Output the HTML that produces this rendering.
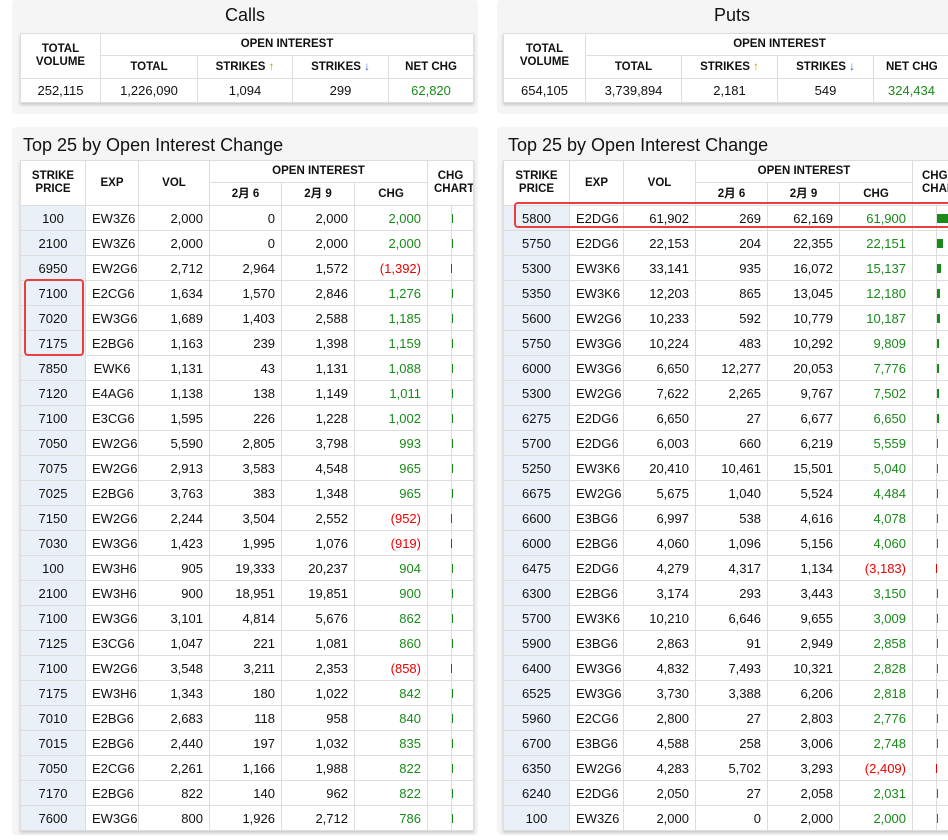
<!DOCTYPE html><html><head><meta charset="utf-8"><style>
body{margin:0;width:948px;height:840px;overflow:hidden;background:#fff;font-family:"Liberation Sans","Noto Sans CJK SC",sans-serif;position:relative}
.p{position:absolute;background:#f5f5f5;border-radius:4px}
.t1{position:absolute;font-size:18px;color:#111;text-align:center}
.t2{position:absolute;font-size:18px;color:#111}
table{position:absolute;border-collapse:collapse;table-layout:fixed;background:#fff;box-shadow:0 2px 3px rgba(0,0,0,.18);font-size:13px;color:#111}
td,th{border:1px solid #ddd;padding:0 6px;white-space:nowrap;overflow:hidden}
th{font-size:11.5px;font-weight:bold;text-align:center;line-height:13px}
.s td{height:23px;text-align:center}
.d td{height:24px;text-align:right}
.d td:nth-child(1){background:#eaf0f8;text-align:center}
.d td:nth-child(2){text-align:center}
.g{color:#1a8a1a}.r{color:#e00}
td.c{padding:0;position:relative}
td.c:before{content:"";position:absolute;left:23px;top:0;bottom:0;width:1px;background:#ddd}
td.c i{position:absolute;top:8px;height:9px;left:24px;width:1px;background:#1a8a1a}
td.c i.n{left:23px;background:#e00}
.hl{position:absolute;border:2px solid #e84040;border-radius:4px}
</style></head><body>
<div class="p" style="left:12px;top:0;width:466px;height:114px"></div>
<div class="p" style="left:497px;top:0;width:460px;height:114px"></div>
<div class="p" style="left:12px;top:127px;width:466px;height:708px"></div>
<div class="p" style="left:497px;top:127px;width:460px;height:708px"></div>
<div class="t1" style="left:12px;top:5px;width:466px">Calls</div>
<div class="t1" style="left:497px;top:5px;width:470px">Puts</div>
<div class="t2" style="left:23px;top:135px">Top 25 by Open Interest Change</div>
<div class="t2" style="left:508px;top:135px">Top 25 by Open Interest Change</div>

<table class="s" style="left:20px;top:33px;width:453px">
<colgroup><col style="width:80px"><col style="width:97px"><col style="width:95px"><col style="width:96px"><col style="width:85px"></colgroup>
<tr><th rowspan="2">TOTAL<br>VOLUME</th><th colspan="4" style="height:21px">OPEN INTEREST</th></tr>
<tr><th style="height:22px">TOTAL</th><th>STRIKES <span style="color:#c90">↑</span></th><th>STRIKES <span style="color:#36c">↓</span></th><th>NET CHG</th></tr>
<tr><td>252,115</td><td>1,226,090</td><td>1,094</td><td>299</td><td class="g">62,820</td></tr>
</table>
<table class="s" style="left:503px;top:33px;width:470px">
<colgroup><col style="width:82px"><col style="width:96px"><col style="width:96px"><col style="width:96px"><col style="width:100px"></colgroup>
<tr><th rowspan="2">TOTAL<br>VOLUME</th><th colspan="4" style="height:21px">OPEN INTEREST</th></tr>
<tr><th style="height:22px">TOTAL</th><th>STRIKES <span style="color:#c90">↑</span></th><th>STRIKES <span style="color:#36c">↓</span></th><th style="text-align:left;padding-left:12px">NET CHG</th></tr>
<tr><td>654,105</td><td>3,739,894</td><td>2,181</td><td>549</td><td class="g" style="text-align:left;padding-left:14px">324,434</td></tr>
</table>

<table class="d" style="left:20px;top:160px;width:453px">
<colgroup><col style="width:65px"><col style="width:53px"><col style="width:71px"><col style="width:72px"><col style="width:73px"><col style="width:73px"><col style="width:46px"></colgroup>
<tr><th rowspan="2">STRIKE<br>PRICE</th><th rowspan="2">EXP</th><th rowspan="2">VOL</th><th colspan="3" style="height:21px">OPEN INTEREST</th><th rowspan="2">CHG<br>CHART</th></tr>
<tr><th style="height:22px">2月 6</th><th>2月 9</th><th>CHG</th></tr>
<tr><td>100</td><td>EW3Z6</td><td>2,000</td><td>0</td><td>2,000</td><td class="g">2,000</td><td class="c"><i></i></td></tr>
<tr><td>2100</td><td>EW3Z6</td><td>2,000</td><td>0</td><td>2,000</td><td class="g">2,000</td><td class="c"><i></i></td></tr>
<tr><td>6950</td><td>EW2G6</td><td>2,712</td><td>2,964</td><td>1,572</td><td class="r">(1,392)</td><td class="c"><i class="n"></i></td></tr>
<tr><td>7100</td><td>E2CG6</td><td>1,634</td><td>1,570</td><td>2,846</td><td class="g">1,276</td><td class="c"><i></i></td></tr>
<tr><td>7020</td><td>EW3G6</td><td>1,689</td><td>1,403</td><td>2,588</td><td class="g">1,185</td><td class="c"><i></i></td></tr>
<tr><td>7175</td><td>E2BG6</td><td>1,163</td><td>239</td><td>1,398</td><td class="g">1,159</td><td class="c"><i></i></td></tr>
<tr><td>7850</td><td>EWK6</td><td>1,131</td><td>43</td><td>1,131</td><td class="g">1,088</td><td class="c"><i></i></td></tr>
<tr><td>7120</td><td>E4AG6</td><td>1,138</td><td>138</td><td>1,149</td><td class="g">1,011</td><td class="c"><i></i></td></tr>
<tr><td>7100</td><td>E3CG6</td><td>1,595</td><td>226</td><td>1,228</td><td class="g">1,002</td><td class="c"><i></i></td></tr>
<tr><td>7050</td><td>EW2G6</td><td>5,590</td><td>2,805</td><td>3,798</td><td class="g">993</td><td class="c"><i></i></td></tr>
<tr><td>7075</td><td>EW2G6</td><td>2,913</td><td>3,583</td><td>4,548</td><td class="g">965</td><td class="c"><i></i></td></tr>
<tr><td>7025</td><td>E2BG6</td><td>3,763</td><td>383</td><td>1,348</td><td class="g">965</td><td class="c"><i></i></td></tr>
<tr><td>7150</td><td>EW2G6</td><td>2,244</td><td>3,504</td><td>2,552</td><td class="r">(952)</td><td class="c"><i class="n"></i></td></tr>
<tr><td>7030</td><td>EW3G6</td><td>1,423</td><td>1,995</td><td>1,076</td><td class="r">(919)</td><td class="c"><i class="n"></i></td></tr>
<tr><td>100</td><td>EW3H6</td><td>905</td><td>19,333</td><td>20,237</td><td class="g">904</td><td class="c"><i></i></td></tr>
<tr><td>2100</td><td>EW3H6</td><td>900</td><td>18,951</td><td>19,851</td><td class="g">900</td><td class="c"><i></i></td></tr>
<tr><td>7100</td><td>EW3G6</td><td>3,101</td><td>4,814</td><td>5,676</td><td class="g">862</td><td class="c"><i></i></td></tr>
<tr><td>7125</td><td>E3CG6</td><td>1,047</td><td>221</td><td>1,081</td><td class="g">860</td><td class="c"><i></i></td></tr>
<tr><td>7100</td><td>EW2G6</td><td>3,548</td><td>3,211</td><td>2,353</td><td class="r">(858)</td><td class="c"><i class="n"></i></td></tr>
<tr><td>7175</td><td>EW3H6</td><td>1,343</td><td>180</td><td>1,022</td><td class="g">842</td><td class="c"><i></i></td></tr>
<tr><td>7010</td><td>E2BG6</td><td>2,683</td><td>118</td><td>958</td><td class="g">840</td><td class="c"><i></i></td></tr>
<tr><td>7015</td><td>E2BG6</td><td>2,440</td><td>197</td><td>1,032</td><td class="g">835</td><td class="c"><i></i></td></tr>
<tr><td>7050</td><td>E2CG6</td><td>2,261</td><td>1,166</td><td>1,988</td><td class="g">822</td><td class="c"><i></i></td></tr>
<tr><td>7170</td><td>E2BG6</td><td>822</td><td>140</td><td>962</td><td class="g">822</td><td class="c"><i></i></td></tr>
<tr><td>7600</td><td>EW3G6</td><td>800</td><td>1,926</td><td>2,712</td><td class="g">786</td><td class="c"><i></i></td></tr>
</table>

<table class="d" style="left:503px;top:160px;width:455px">
<colgroup><col style="width:66px"><col style="width:54px"><col style="width:72px"><col style="width:72px"><col style="width:72px"><col style="width:73px"><col style="width:46px"></colgroup>
<tr><th rowspan="2">STRIKE<br>PRICE</th><th rowspan="2">EXP</th><th rowspan="2">VOL</th><th colspan="3" style="height:21px">OPEN INTEREST</th><th rowspan="2" style="text-align:left;padding-left:9px">CHG<br>CHART</th></tr>
<tr><th style="height:22px">2月 6</th><th>2月 9</th><th>CHG</th></tr>
<tr><td>5800</td><td>E2DG6</td><td>61,902</td><td>269</td><td>62,169</td><td class="g">61,900</td><td class="c"><i style="width:14px"></i></td></tr>
<tr><td>5750</td><td>E2DG6</td><td>22,153</td><td>204</td><td>22,355</td><td class="g">22,151</td><td class="c"><i style="width:6px"></i></td></tr>
<tr><td>5300</td><td>EW3K6</td><td>33,141</td><td>935</td><td>16,072</td><td class="g">15,137</td><td class="c"><i style="width:4px"></i></td></tr>
<tr><td>5350</td><td>EW3K6</td><td>12,203</td><td>865</td><td>13,045</td><td class="g">12,180</td><td class="c"><i style="width:3px"></i></td></tr>
<tr><td>5600</td><td>EW2G6</td><td>10,233</td><td>592</td><td>10,779</td><td class="g">10,187</td><td class="c"><i style="width:3px"></i></td></tr>
<tr><td>5750</td><td>EW3G6</td><td>10,224</td><td>483</td><td>10,292</td><td class="g">9,809</td><td class="c"><i style="width:2px"></i></td></tr>
<tr><td>6000</td><td>EW3G6</td><td>6,650</td><td>12,277</td><td>20,053</td><td class="g">7,776</td><td class="c"><i style="width:2px"></i></td></tr>
<tr><td>5300</td><td>EW2G6</td><td>7,622</td><td>2,265</td><td>9,767</td><td class="g">7,502</td><td class="c"><i style="width:2px"></i></td></tr>
<tr><td>6275</td><td>E2DG6</td><td>6,650</td><td>27</td><td>6,677</td><td class="g">6,650</td><td class="c"><i style="width:2px"></i></td></tr>
<tr><td>5700</td><td>E2DG6</td><td>6,003</td><td>660</td><td>6,219</td><td class="g">5,559</td><td class="c"><i></i></td></tr>
<tr><td>5250</td><td>EW3K6</td><td>20,410</td><td>10,461</td><td>15,501</td><td class="g">5,040</td><td class="c"><i></i></td></tr>
<tr><td>6675</td><td>EW2G6</td><td>5,675</td><td>1,040</td><td>5,524</td><td class="g">4,484</td><td class="c"><i></i></td></tr>
<tr><td>6600</td><td>E3BG6</td><td>6,997</td><td>538</td><td>4,616</td><td class="g">4,078</td><td class="c"><i></i></td></tr>
<tr><td>6000</td><td>E2BG6</td><td>4,060</td><td>1,096</td><td>5,156</td><td class="g">4,060</td><td class="c"><i></i></td></tr>
<tr><td>6475</td><td>E2DG6</td><td>4,279</td><td>4,317</td><td>1,134</td><td class="r">(3,183)</td><td class="c"><i class="n"></i></td></tr>
<tr><td>6300</td><td>E2BG6</td><td>3,174</td><td>293</td><td>3,443</td><td class="g">3,150</td><td class="c"><i></i></td></tr>
<tr><td>5700</td><td>EW3K6</td><td>10,210</td><td>6,646</td><td>9,655</td><td class="g">3,009</td><td class="c"><i></i></td></tr>
<tr><td>5900</td><td>E3BG6</td><td>2,863</td><td>91</td><td>2,949</td><td class="g">2,858</td><td class="c"><i></i></td></tr>
<tr><td>6400</td><td>EW3G6</td><td>4,832</td><td>7,493</td><td>10,321</td><td class="g">2,828</td><td class="c"><i></i></td></tr>
<tr><td>6525</td><td>EW3G6</td><td>3,730</td><td>3,388</td><td>6,206</td><td class="g">2,818</td><td class="c"><i></i></td></tr>
<tr><td>5960</td><td>E2CG6</td><td>2,800</td><td>27</td><td>2,803</td><td class="g">2,776</td><td class="c"><i></i></td></tr>
<tr><td>6700</td><td>E3BG6</td><td>4,588</td><td>258</td><td>3,006</td><td class="g">2,748</td><td class="c"><i></i></td></tr>
<tr><td>6350</td><td>EW2G6</td><td>4,283</td><td>5,702</td><td>3,293</td><td class="r">(2,409)</td><td class="c"><i class="n"></i></td></tr>
<tr><td>6240</td><td>E2DG6</td><td>2,050</td><td>27</td><td>2,058</td><td class="g">2,031</td><td class="c"><i></i></td></tr>
<tr><td>100</td><td>EW3Z6</td><td>2,000</td><td>0</td><td>2,000</td><td class="g">2,000</td><td class="c"><i></i></td></tr>
</table>

<div class="hl" style="left:24px;top:279px;width:56px;height:73px"></div>
<div class="hl" style="left:514px;top:202px;width:450px;height:22px"></div>
</body></html>
